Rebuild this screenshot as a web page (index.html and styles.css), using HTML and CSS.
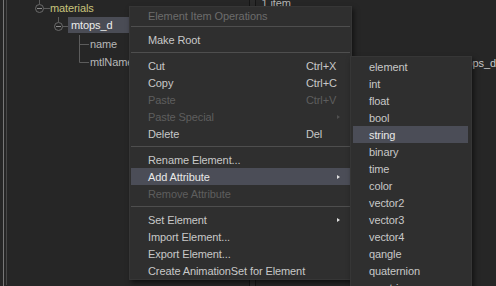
FILE: index.html
```html
<!DOCTYPE html>
<html lang="en">
<head>
    <meta charset="UTF-8">
    <title>Element Item Operations</title>
    <link rel="stylesheet" href="styles.css">
</head>
<body>
    <div class="app">
        <!-- element tree -->
        <div class="left">
            <div class="tree">
                <div class="row">
                    <svg class="gutter" width="43" height="18">
                        <line x1="32.5" y1="0" x2="32.5" y2="5" />
                        <line x1="36.5" y1="9.5" x2="43" y2="9.5" />
                        <circle cx="32.5" cy="9.5" r="4" />
                        <line class="minus" x1="30" y1="9.5" x2="35" y2="9.5" />
                    </svg>
                    <span class="label folder">materials</span>
                </div>
                <div class="row">
                    <svg class="gutter" width="61" height="18">
                        <line x1="51.5" y1="0" x2="51.5" y2="5" />
                        <line x1="55.5" y1="9.5" x2="61" y2="9.5" />
                        <circle cx="51.5" cy="9.5" r="4" />
                        <line class="minus" x1="49" y1="9.5" x2="54" y2="9.5" />
                    </svg>
                    <span class="label sel">mtops_d</span>
                </div>
                <div class="row">
                    <svg class="gutter" width="83" height="18">
                        <line x1="72.5" y1="0" x2="72.5" y2="18" />
                        <line x1="72.5" y1="9.5" x2="82" y2="9.5" />
                    </svg>
                    <span class="label">name</span>
                </div>
                <div class="row">
                    <svg class="gutter" width="83" height="18">
                        <line x1="72.5" y1="0" x2="72.5" y2="9.5" />
                        <line x1="72.5" y1="9.5" x2="82" y2="9.5" />
                    </svg>
                    <span class="label">mtlName</span>
                </div>
            </div>
        </div>
        <div class="splitter"></div>
        <!-- attribute view -->
        <div class="right">
            <div class="count">1 item</div>
            <div class="rrow">mtops_d</div>
        </div>
    </div>

    <!-- context menu -->
    <div class="menu main-menu">
        <div class="item header">Element Item Operations</div>
        <div class="sep first"></div>
        <div class="item"><span class="text">Make Root</span></div>
        <div class="sep"></div>
        <div class="item"><span class="text">Cut</span><span class="key">Ctrl+X</span></div>
        <div class="item"><span class="text">Copy</span><span class="key">Ctrl+C</span></div>
        <div class="item disabled"><span class="text">Paste</span><span class="key">Ctrl+V</span></div>
        <div class="item disabled"><span class="text">Paste Special</span><span class="key"></span><span class="arrow"></span></div>
        <div class="item"><span class="text">Delete</span><span class="key">Del</span></div>
        <div class="sep"></div>
        <div class="item"><span class="text">Rename Element...</span></div>
        <div class="item active"><span class="text">Add Attribute</span><span class="key"></span><span class="arrow"></span></div>
        <div class="item disabled"><span class="text">Remove Attribute</span></div>
        <div class="sep"></div>
        <div class="item"><span class="text">Set Element</span><span class="key"></span><span class="arrow"></span></div>
        <div class="item"><span class="text">Import Element...</span></div>
        <div class="item"><span class="text">Export Element...</span></div>
        <div class="item"><span class="text">Create AnimationSet for Element</span></div>
    </div>

    <!-- Add Attribute submenu -->
    <div class="menu sub-menu">
        <div class="item">element</div>
        <div class="item">int</div>
        <div class="item">float</div>
        <div class="item">bool</div>
        <div class="item active">string</div>
        <div class="item">binary</div>
        <div class="item">time</div>
        <div class="item">color</div>
        <div class="item">vector2</div>
        <div class="item">vector3</div>
        <div class="item">vector4</div>
        <div class="item">qangle</div>
        <div class="item">quaternion</div>
        <div class="item">vmatrix</div>
    </div>
</body>
</html>
```

FILE: styles.css
```css
* {
    box-sizing: border-box;
}

body {
    margin: 0;
    width: 496px;
    height: 286px;
    overflow: hidden;
    position: relative;
    background-color: #262626;
    font-family: "Liberation Sans", Arial, sans-serif;
    font-size: 11px;
    letter-spacing: -0.1px;
    color: #c8c8c8;
}

.app {
    display: flex;
    height: 286px;
    padding-left: 3px;
}

.left {
    width: 257px;
    border-left: 1px solid #787878;
    padding-left: 2px;
}

.tree {
    height: 100%;
    border-left: 1px solid #474747;
    margin-top: -1px;
}

.row {
    display: flex;
    height: 18px;
    align-items: center;
}

.gutter {
    display: block;
    flex-shrink: 0;
}

.gutter line {
    stroke: #5c5c5c;
    stroke-width: 1;
}

.gutter circle {
    fill: #262626;
    stroke: #6a6a6a;
    stroke-width: 1;
}

.gutter .minus {
    stroke: #8c8c8c;
}

.label {
    color: #b8b8b8;
    white-space: nowrap;
}

.label.folder {
    color: #c9c47c;
}

.label.sel {
    align-self: flex-start;
    flex: 1;
    height: 16px;
    line-height: 16px;
    padding-left: 3px;
    background-color: #4a4c55;
    color: #ececec;
}

.splitter {
    width: 7px;
    border-left: 1px solid #161616;
    border-right: 1px solid #161616;
    background-color: #2b2b2b;
}

.right {
    flex: 1;
    padding-left: 6px;
}

.count {
    margin-top: -3px;
    line-height: 13px;
    color: #b4b4b4;
}

.rrow {
    margin-top: 47px;
    line-height: 13px;
    padding-left: 193px;
    color: #c8c8c8;
    white-space: nowrap;
}

/* menus */
.menu {
    position: absolute;
    background-color: #2f2f2f;
    border: 1px solid #363636;
    box-shadow: 2px 3px 5px rgba(0, 0, 0, 0.55);
}

.main-menu {
    left: 129px;
    top: 6px;
    width: 223px;
    padding: 0 1px;
}

.sub-menu {
    left: 350px;
    top: 56px;
    width: 122px;
    padding: 1px 3px 0 2px;
}

.item {
    display: flex;
    align-items: center;
    height: 17px;
    padding-left: 17px;
    white-space: nowrap;
    color: #c8c8c8;
}

.sub-menu .item {
    padding-left: 16px;
}

.item .text {
    width: 158px;
}

.item .key {
    flex: 1;
}

.item .arrow {
    width: 0;
    height: 0;
    border-left: 3px solid #e0e0e0;
    border-top: 2.5px solid transparent;
    border-bottom: 2.5px solid transparent;
    margin-right: 10px;
}

.item.header {
    color: #6c6c6c;
}

.item.disabled {
    color: #5e5e5e;
}

.item.disabled .arrow {
    border-left-color: #4e4e4e;
}

.item.active {
    background-color: #4b4d57;
    color: #e8e8e8;
}

.sep {
    height: 1px;
    margin: 4px 0;
    background-color: #4e4e4e;
}

.sep.first {
    margin: 2px 0 4px;
}
```
